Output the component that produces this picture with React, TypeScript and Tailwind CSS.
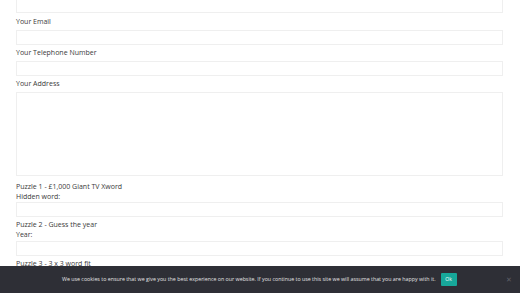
const font = { fontFamily: '"Open Sans", "Noto Sans", sans-serif' };

function Field({ label, tall, gap = "mt-[3px]" }: { label: string; tall?: boolean; gap?: string }) {
  return (
    <div className="flex flex-col">
      <label className="h-[10px] text-[7px] leading-[10px] text-[#3a3a3a]">{label}</label>
      <div
        className={`${gap} w-full border border-[#efefef] bg-white ${
          tall ? "h-[84px]" : "h-[15px]"
        }`}
      />
    </div>
  );
}

function CookieBar() {
  return (
    <div className="absolute inset-x-0 bottom-0 flex h-[27px] items-center bg-[#2e2f36] pl-[62px]">
      <span className="text-[5.3px] leading-none whitespace-nowrap text-[#e4e4e4]">
        We use cookies to ensure that we give you the best experience on our website. If you
        continue to use this site we will assume that you are happy with it.
      </span>
      <button
        type="button"
        className="ml-[5px] flex h-[13px] w-[16px] items-center justify-center rounded-[1px] bg-[#17a89a] text-[5px] leading-none text-white"
      >
        Ok
      </button>
      <span className="mr-[8px] ml-auto text-[7px] leading-none text-[#5e5f66]">✕</span>
    </div>
  );
}

export default function App() {
  return (
    <div className="relative h-[293px] w-[520px] overflow-hidden bg-white" style={font}>
      <div className="flex flex-col px-[16px] pr-[17px]">
        <div className="mt-[-3px] h-[16px] w-full border border-[#efefef]" />
        <div className="mt-[4px] flex flex-col gap-[3px]">
          <Field label="Your Email" />
          <Field label="Your Telephone Number" />
          <Field label="Your Address" tall />
        </div>
        <div className="mt-[5px] text-[7px] leading-[11px] text-[#3a3a3a]">
          Puzzle 1 - £1,000 Giant TV Xword
        </div>
        <Field label="Hidden word:" gap="mt-0" />
        <div className="mt-[2px] text-[7px] leading-[11px] text-[#3a3a3a]">
          Puzzle 2 - Guess the year
        </div>
        <Field label="Year:" gap="mt-[1px]" />
        <div className="mt-[2px] text-[7px] leading-[11px] text-[#3a3a3a]">
          Puzzle 3 - 3 x 3 word fit
        </div>
        <Field label="Answer:" />
      </div>
      <CookieBar />
    </div>
  );
}
